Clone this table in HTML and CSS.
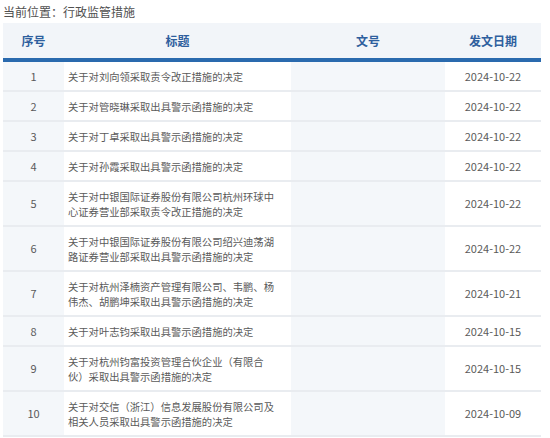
FILE: index.html
```html
<!DOCTYPE html>
<html lang="zh-CN">
<head>
<meta charset="utf-8">
<title>行政监管措施</title>
<link rel="stylesheet" href="styles.css">
</head>
<body>
<div class="crumb">当前位置：行政监管措施</div>
<table class="list">
  <colgroup>
    <col class="c-no"><col class="c-title"><col class="c-doc"><col class="c-date">
  </colgroup>
  <thead>
    <tr><th>序号</th><th>标题</th><th>文号</th><th>发文日期</th></tr>
  </thead>
  <tbody>
    <tr><td class="no">1</td><td class="title">关于对刘向领采取责令改正措施的决定</td><td class="doc"></td><td class="date">2024-10-22</td></tr>
    <tr><td class="no">2</td><td class="title">关于对管晓琳采取出具警示函措施的决定</td><td class="doc"></td><td class="date">2024-10-22</td></tr>
    <tr><td class="no">3</td><td class="title">关于对丁卓采取出具警示函措施的决定</td><td class="doc"></td><td class="date">2024-10-22</td></tr>
    <tr><td class="no">4</td><td class="title">关于对孙霞采取出具警示函措施的决定</td><td class="doc"></td><td class="date">2024-10-22</td></tr>
    <tr><td class="no">5</td><td class="title">关于对中银国际证券股份有限公司杭州环球中心证券营业部采取责令改正措施的决定</td><td class="doc"></td><td class="date">2024-10-22</td></tr>
    <tr><td class="no">6</td><td class="title">关于对中银国际证券股份有限公司绍兴迪荡湖路证券营业部采取出具警示函措施的决定</td><td class="doc"></td><td class="date">2024-10-22</td></tr>
    <tr><td class="no">7</td><td class="title">关于对杭州泽楠资产管理有限公司、韦鹏、杨伟杰、胡鹏坤采取出具警示函措施的决定</td><td class="doc"></td><td class="date">2024-10-21</td></tr>
    <tr><td class="no">8</td><td class="title">关于对叶志钧采取出具警示函措施的决定</td><td class="doc"></td><td class="date">2024-10-15</td></tr>
    <tr><td class="no">9</td><td class="title">关于对杭州钧富投资管理合伙企业（有限合伙）采取出具警示函措施的决定</td><td class="doc"></td><td class="date">2024-10-15</td></tr>
    <tr><td class="no">10</td><td class="title">关于对交信（浙江）信息发展股份有限公司及相关人员采取出具警示函措施的决定</td><td class="doc"></td><td class="date">2024-10-09</td></tr>
  </tbody>
</table>
</body>
</html>
```
FILE: styles.css
```css
html, body {
  margin: 0;
  padding: 0;
  background: #ffffff;
}
body {
  padding: 3px 0 0 3px;
  font-family: "Noto Sans CJK SC", "Noto Sans", sans-serif;
  color: #555555;
}
.crumb {
  font-size: 12px;
  line-height: 18px;
  height: 20px;
  color: #505050;
}
.list {
  border-collapse: collapse;
  table-layout: fixed;
  width: 538px;
}
.c-no { width: 61px; }
.c-title { width: 227px; }
.c-doc { width: 154px; }
.c-date { width: 96px; }
.list th {
  background: #f2f5f9;
  color: #2f5f9e;
  font-weight: bold;
  font-size: 12px;
  line-height: 16px;
  height: 32px;
  padding: 0;
  text-align: center;
  border-bottom: 4px solid #2a6aae;
  box-sizing: border-box;
}
.list thead tr { height: 37px; }
.list td {
  font-size: 10.3px;
  line-height: 15px;
  padding: 6.5px 4px;
  border-bottom: 2px solid #e9ecf0;
  vertical-align: middle;
  color: #5a5a5a;
}
.list td.no {
  text-align: center;
  background: #f4f7fa;
  font-size: 11px;
}
.list td.title {
  text-align: left;
  padding-right: 14px;
}
.list td.doc {
  background: #f4f7fa;
}
.list td.date {
  text-align: center;
  font-size: 11px;
}
```
